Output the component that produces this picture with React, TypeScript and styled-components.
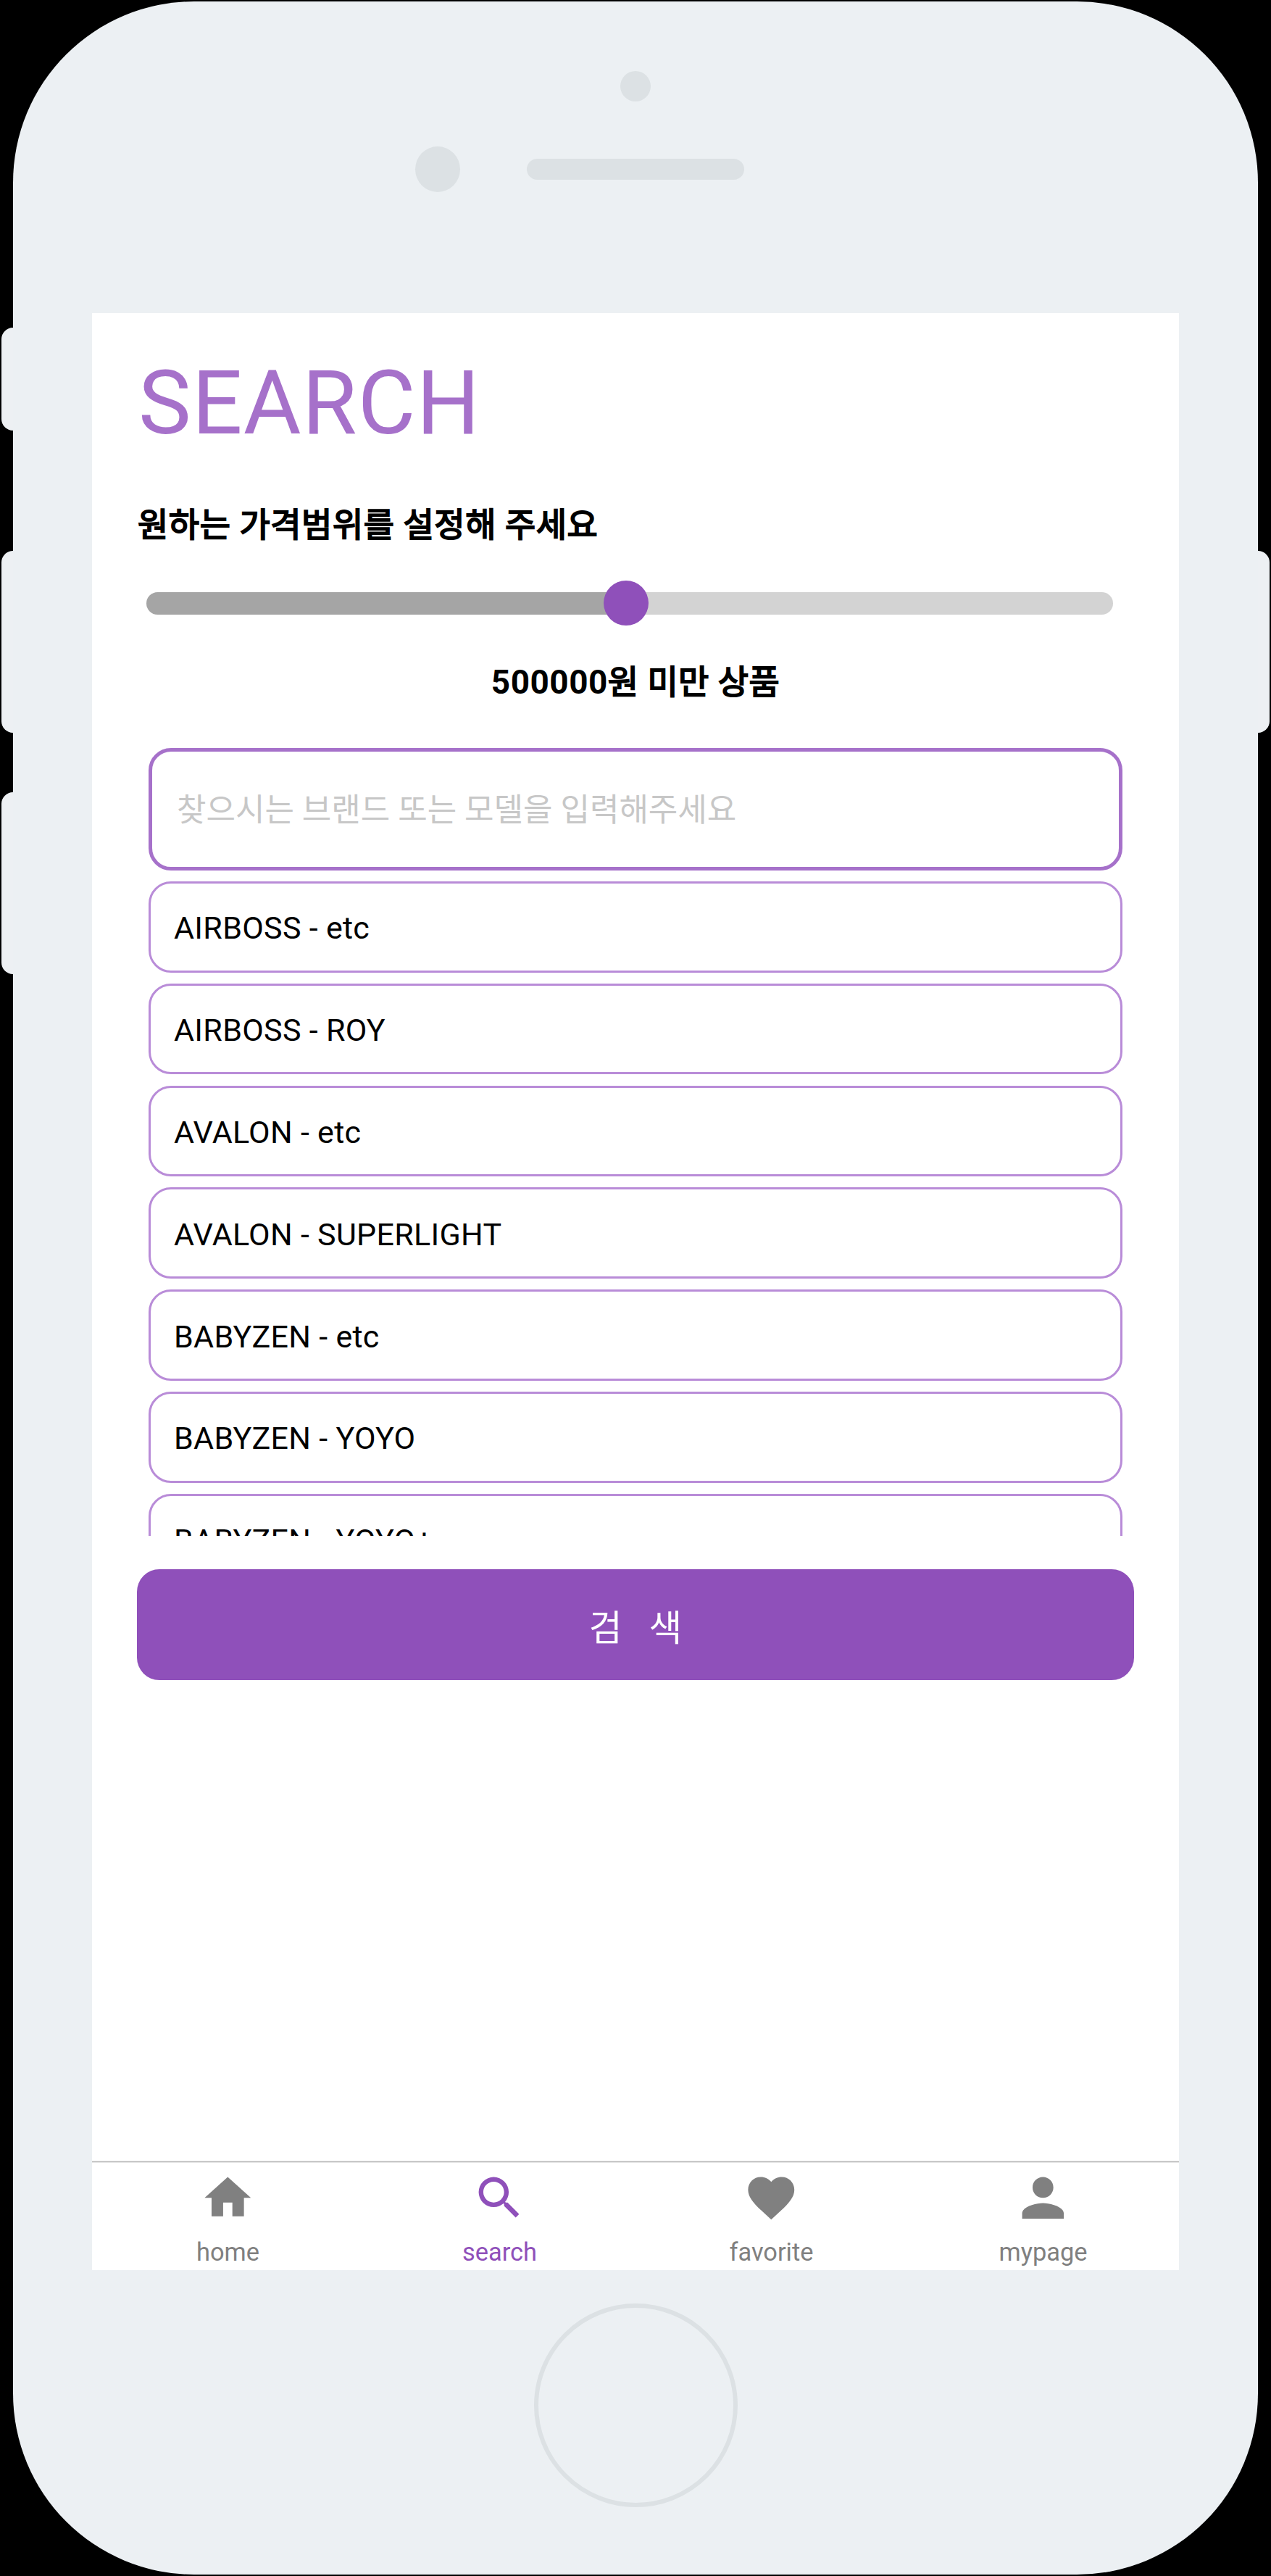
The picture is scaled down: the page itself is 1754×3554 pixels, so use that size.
import React from "react";
import styled, { createGlobalStyle } from "styled-components";
import { MdFavorite, MdHome, MdSearch } from "react-icons/md";

const purple = "#8f50ba";
const softPurple = "#a671ca";

const GlobalStyle = createGlobalStyle`
  * { box-sizing: border-box; }
  html, body { margin: 0; background: #000; }
  body { font-family: Roboto, "Noto Sans CJK KR", sans-serif; color: #000; }
`;

const Stage = styled.main`
  position: relative;
  width: 1754px;
  height: 3554px;
  padding: 2px 18px;
  overflow: hidden;
  background: #000;
`;

const SideButton = styled.span<{ $side: "left" | "right"; $top: number; $height: number }>`
  position: absolute;
  ${(p) => p.$side}: 2px;
  top: ${(p) => p.$top}px;
  width: 40px;
  height: ${(p) => p.$height}px;
  border-radius: 16px;
  background: #edf0f3;
`;

const Body = styled.div`
  position: relative;
  display: flex;
  flex-direction: column;
  align-items: center;
  width: 1718px;
  height: 3550px;
  border-radius: 250px;
  background: #ecf0f3;
`;

const Bezel = styled.header`
  display: flex;
  flex-direction: column;
  align-items: center;
  width: 100%;
  height: 430px;
  padding-top: 96px;
`;

const Camera = styled.span`
  width: 42px;
  height: 42px;
  border-radius: 50%;
  background: #dce1e4;
`;

const SpeakerRow = styled.div`
  display: flex;
  align-items: center;
  gap: 92px;
  margin-top: 62px;
  padding-right: 154px;
`;

const Sensor = styled.span`
  width: 62px;
  height: 63px;
  border-radius: 50%;
  background: #dce1e4;
`;

const Speaker = styled.span`
  width: 300px;
  height: 29px;
  border-radius: 15px;
  background: #dce1e4;
`;

const Screen = styled.section`
  display: flex;
  flex-direction: column;
  width: 1500px;
  height: 2700px;
  background: #fff;
`;

const Content = styled.div`
  display: flex;
  flex-direction: column;
  flex: 1;
  min-height: 0;
  padding: 52px 62px 0;
`;

const Title = styled.h1`
  margin: 0 0 0 2px;
  font-size: 122.4px;
  line-height: 144px;
  font-weight: 400;
  letter-spacing: 1.3px;
  color: ${softPurple};
`;

const Prompt = styled.h2`
  margin: 61px 0 0 1px;
  font-size: 45.9px;
  line-height: 70px;
  font-weight: 400;
  letter-spacing: 0.6px;
  -webkit-text-stroke: 2px #000;
`;

const Slider = styled.div`
  display: flex;
  align-items: center;
  height: 62px;
  margin: 42px 29px 0 13px;
`;

const Fill = styled.span`
  flex: 0 0 662px;
  height: 31px;
  margin-right: -31px;
  border-radius: 16px 0 0 16px;
  background: #a5a5a5;
`;

const Thumb = styled.span`
  z-index: 1;
  flex: 0 0 62px;
  height: 62px;
  border-radius: 50%;
  background: ${purple};
`;

const Rest = styled.span`
  flex: 1;
  height: 31px;
  margin-left: -31px;
  border-radius: 0 16px 16px 0;
  background: #d3d3d3;
`;

const Price = styled.p`
  margin: 43px 0 0;
  font-size: 45.9px;
  line-height: 70px;
  letter-spacing: 0.5px;
  text-align: center;
  -webkit-text-stroke: 2px #000;
`;

const Amount = styled.b`
  font-weight: 700;
  -webkit-text-stroke: 0;
`;

const SearchInput = styled.input`
  flex: none;
  height: 169px;
  margin: 56px 16px 0;
  padding: 3px 33px 0 34px;
  border: 5px solid ${softPurple};
  border-radius: 31px;
  outline: none;
  background: #fff;
  font: 400 44px Roboto, "Noto Sans CJK KR", sans-serif;
  &::placeholder { color: #c7c7c7; opacity: 1; }
`;

const Results = styled.ul`
  display: flex;
  flex-direction: column;
  flex: none;
  gap: 15.33px;
  height: 903px;
  margin: 15px 16px 0;
  padding: 0;
  overflow: hidden;
  list-style: none;
`;

const Result = styled.li`
  display: flex;
  flex: 0 0 125.5px;
  align-items: center;
  padding: 3px 0 0 32px;
  border: 3px solid #b98cd8;
  border-radius: 31px;
  font-size: 43px;
  letter-spacing: 0.3px;
  line-height: 50px;
`;

const Submit = styled.button`
  flex: none;
  height: 153px;
  margin-top: 46px;
  padding: 0;
  border: 0;
  border-radius: 31px;
  background: ${purple};
  color: #fff;
  font: 400 49.8px Roboto, "Noto Sans CJK KR", sans-serif;
  white-space: pre;
`;

const TabBar = styled.nav`
  display: flex;
  height: 151px;
  border-top: 1px solid #e6e6e6;
  box-shadow: inset 0 1px #b8b8b8, inset 0 2px #e6e6e6;
`;

const Tab = styled.a<{ $active?: boolean }>`
  display: flex;
  flex: 1;
  flex-direction: column;
  align-items: center;
  padding-top: 12px;
  color: ${(p) => (p.$active ? purple : "#808080")};
  font-size: 34.4px;
  line-height: 40px;
  svg { width: 76.6px; height: 76.6px; fill: currentColor; }
`;

const TabLabel = styled.span`
  margin-top: 16.4px;
`;

const HomeButton = styled.span`
  width: 281px;
  height: 281px;
  margin-top: 46px;
  border: 6px solid #dce1e4;
  border-radius: 50%;
`;

const PersonIcon = () => (
  <svg viewBox="1.333 1.333 21.333 21.333">
    <path d="M12 12c2.21 0 4-1.79 4-4s-1.79-4-4-4-4 1.79-4 4 1.79 4 4 4zm0 2c-2.67 0-8 1.34-8 4v2h16v-2c0-2.66-5.33-4-8-4z" />
  </svg>
);

const models = [
  "AIRBOSS - etc",
  "AIRBOSS - ROY",
  "AVALON - etc",
  "AVALON - SUPERLIGHT",
  "BABYZEN - etc",
  "BABYZEN - YOYO",
  "BABYZEN - YOYO+",
];

const tabs = [
  { label: "home", icon: <MdHome /> },
  { label: "search", icon: <MdSearch />, active: true },
  { label: "favorite", icon: <MdFavorite /> },
  { label: "mypage", icon: <PersonIcon /> },
];

export default function App() {
  return (
    <>
      <GlobalStyle />
      <Stage>
        <SideButton $side="left" $top={452} $height={142} />
        <SideButton $side="left" $top={760} $height={251} />
        <SideButton $side="left" $top={1093} $height={251} />
        <SideButton $side="right" $top={760} $height={251} />
        <Body>
          <Bezel>
            <Camera />
            <SpeakerRow>
              <Sensor />
              <Speaker />
            </SpeakerRow>
          </Bezel>
          <Screen>
            <Content>
              <Title>SEARCH</Title>
              <Prompt>원하는 가격범위를 설정해 주세요</Prompt>
              <Slider>
                <Fill />
                <Thumb />
                <Rest />
              </Slider>
              <Price>
                <Amount>500000</Amount>원 미만 상품
              </Price>
              <SearchInput placeholder="찾으시는 브랜드 또는 모델을 입력해주세요" />
              <Results>
                {models.map((name) => (
                  <Result key={name}>{name}</Result>
                ))}
              </Results>
              <Submit>{"검   색"}</Submit>
            </Content>
            <TabBar>
              {tabs.map((t) => (
                <Tab key={t.label} $active={t.active}>
                  {t.icon}
                  <TabLabel>{t.label}</TabLabel>
                </Tab>
              ))}
            </TabBar>
          </Screen>
          <HomeButton />
        </Body>
      </Stage>
    </>
  );
}
